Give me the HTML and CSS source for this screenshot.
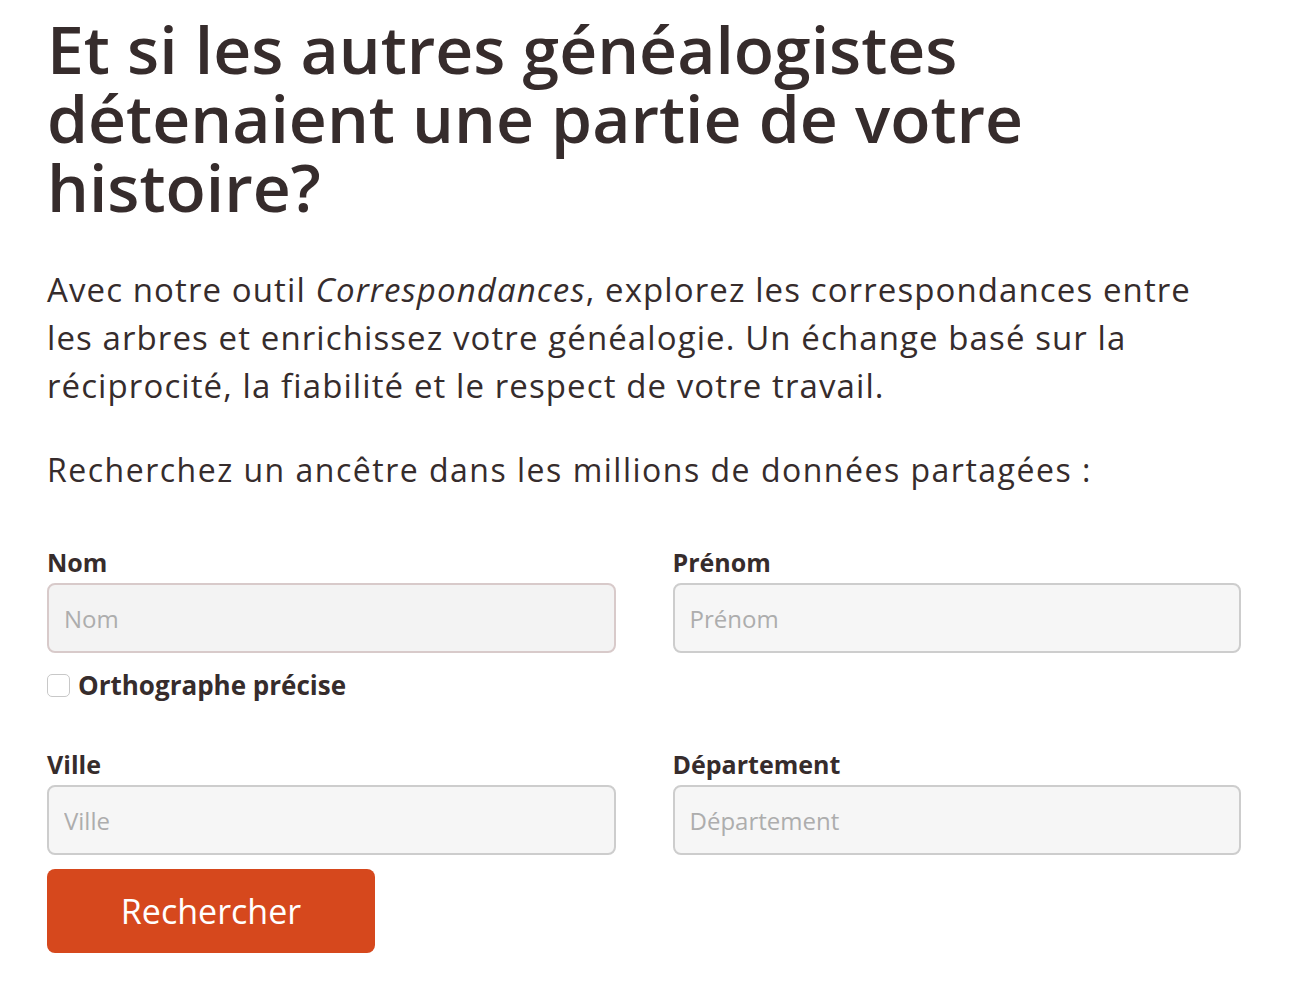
FILE: index.html
```html
<!DOCTYPE html>
<html lang="fr">
<head>
<meta charset="utf-8">
<link rel="stylesheet" href="styles.css">
</head>
<body>
<main class="page">
  <h1 class="title">Et si les autres généalogistes détenaient une partie de votre histoire?</h1>
  <p class="intro">Avec notre outil <em>Correspondances</em>, explorez les correspondances entre les arbres et enrichissez votre généalogie. Un échange basé sur la réciprocité, la fiabilité et le respect de votre travail.</p>
  <p class="lead">Recherchez un ancêtre dans les millions de données partagées :</p>
  <form class="search">
    <div class="row">
      <div class="field">
        <label class="label" for="nom">Nom</label>
        <input class="input input-focus" id="nom" type="text" placeholder="Nom">
        <label class="check"><span class="box"></span>Orthographe précise</label>
      </div>
      <div class="field">
        <label class="label" for="prenom">Prénom</label>
        <input class="input" id="prenom" type="text" placeholder="Prénom">
      </div>
    </div>
    <div class="row row-2">
      <div class="field">
        <label class="label" for="ville">Ville</label>
        <input class="input" id="ville" type="text" placeholder="Ville">
      </div>
      <div class="field">
        <label class="label" for="dep">Département</label>
        <input class="input" id="dep" type="text" placeholder="Département">
      </div>
    </div>
    <button class="btn" type="button">Rechercher</button>
  </form>
</main>
</body>
</html>
```

FILE: styles.css
```css
* { box-sizing: border-box; }
body {
  margin: 0;
  background: #fff;
  font-family: "Open Sans", "Noto Sans", sans-serif;
  color: #362c2c;
}
.page {
  padding: 14px 53px 0 47px;
}
.title {
  margin: 0;
  font-size: 66px;
  line-height: 69px;
  font-weight: 600;
  max-width: 1000px;
}
.intro {
  margin: 45px 0 0;
  max-width: 1160px;
  font-size: 33px;
  line-height: 48px;
  font-weight: 400;
  letter-spacing: 1.1px;
}
.intro em { font-style: italic; }
.lead {
  margin: 36px 0 0;
  font-size: 32px;
  line-height: 48px;
  letter-spacing: 1.5px;
}
.search { margin-top: 51px; }
.row {
  display: grid;
  grid-template-columns: 1fr 1fr;
  column-gap: 57px;
}
.row-2 { margin-top: 47px; }
.field { display: flex; flex-direction: column; }
.label {
  font-size: 25px;
  font-weight: 700;
  line-height: 34px;
  margin-bottom: 4px;
}
.input {
  height: 70px;
  border: 2px solid #cdcdcd;
  border-radius: 8px;
  background: #f6f6f6;
  padding: 0 15px;
  font-family: inherit;
  font-size: 24px;
  color: #362c2c;
  outline: none;
}
.input-focus { background: #f3f3f3; border-color: #d8caca; }
.input::placeholder { color: #adadad; }
.check {
  display: flex;
  align-items: center;
  gap: 8px;
  margin-top: 17px;
  font-size: 26px;
  font-weight: 700;
  line-height: 30px;
}
.box {
  width: 23px;
  height: 23px;
  border: 1.5px solid #c8c8c8;
  border-radius: 5px;
  background: #fff;
}
.btn {
  display: block;
  margin-top: 14px;
  width: 328px;
  height: 84px;
  border: 0;
  border-radius: 8px;
  background: #d6481d;
  color: #fff;
  font-family: inherit;
  font-size: 34px;
}
```
